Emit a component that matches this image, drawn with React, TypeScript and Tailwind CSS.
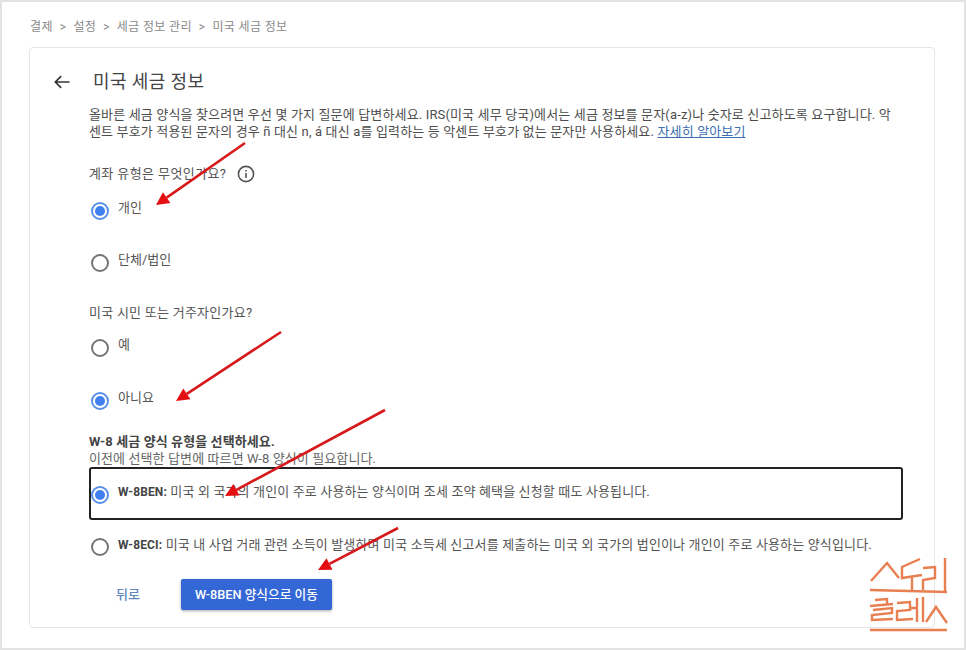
import React from "react";

const KR = "font-['Roboto','Noto_Sans_CJK_KR',sans-serif]";

function Radio({ on }: { on?: boolean }) {
  return on ? (
    <span className="shrink-0 w-[18px] h-[18px] rounded-full border-2 border-[#5a8fe6] flex items-center justify-center">
      <span className="w-[10px] h-[10px] rounded-full bg-[#3f80ee]" />
    </span>
  ) : (
    <span className="shrink-0 w-[18px] h-[18px] rounded-full border-2 border-[#757575]" />
  );
}

function Option({ on, label, cls }: { on?: boolean; label: string; cls: string }) {
  return (
    <div className={`flex items-start gap-[9px] pl-[2px] ${cls}`}>
      <Radio on={on} />
      <span className="text-[13px] leading-[16px] text-[#555] -mt-[2px]">{label}</span>
    </div>
  );
}

const arrows: [number, number, number, number][] = [
  [245, 143, 156, 205],
  [281, 332, 176, 401],
  [385, 410, 225, 496],
  [398, 528, 318, 570],
];

function Arrow({ a }: { a: [number, number, number, number] }) {
  const [x1, y1, x2, y2] = a;
  const dx = x2 - x1, dy = y2 - y1;
  const l = Math.hypot(dx, dy);
  const ux = dx / l, uy = dy / l;
  const bx = x2 - ux * 13, by = y2 - uy * 13;
  const px = -uy * 6.5, py = ux * 6.5;
  return (
    <g>
      <line x1={x1} y1={y1} x2={bx} y2={by} stroke="#d7191c" strokeWidth="2.6" />
      <polygon points={`${x2},${y2} ${bx + px},${by + py} ${bx - px},${by - py}`} fill="#e30f12" />
    </g>
  );
}

export default function App() {
  return (
    <div className={`relative w-[966px] h-[650px] bg-white border-2 border-[#e3e3e3] overflow-hidden ${KR}`}>
      <div className="flex items-start gap-[6px] pl-[28px] pt-[17px] h-[45px] text-[12px] leading-[16px] text-[#8a8a8a] tracking-[0.35px]">
        <span>결제</span><span className="px-[1px]">&gt;</span>
        <span>설정</span><span className="px-[1px]">&gt;</span>
        <span>세금 정보 관리</span><span className="px-[1px]">&gt;</span>
        <span>미국 세금 정보</span>
      </div>

      <div className="ml-[27px] w-[906px] h-[581px] border border-[#e6e6e6] rounded-[4px] flex flex-col">
        <div className="flex items-center h-[24px] mt-[22px] pl-[22px]">
          <svg width="20" height="20" viewBox="0 0 24 24" fill="none" stroke="#333" strokeWidth="2">
            <path d="M21 12H4M11 5l-7 7 7 7" />
          </svg>
          <span className="ml-[21px] text-[18px] leading-[24px] text-[#444] tracking-[0.4px]">미국 세금 정보</span>
        </div>

        <div className="pl-[59px] pr-[40px] flex flex-col">
          <p className="mt-[12px] text-[13px] leading-[17px] text-[#4d4d4d] tracking-[0.15px]">
            올바른 세금 양식을 찾으려면 우선 몇 가지 질문에 답변하세요. IRS(미국 세무 당국)에서는 세금 정보를 문자(a-z)나 숫자로 신고하도록 요구합니다. 악센트 부호가 적용된 문자의 경우 ñ 대신 n, á 대신 a를 입력하는 등 악센트 부호가 없는 문자만 사용하세요.{" "}
            <span className="text-[#3d6fb0] underline">자세히 알아보기</span>
          </p>

          <div className="mt-[24px] flex items-center gap-[11px] h-[20px]">
            <span className="text-[13px] text-[#555] tracking-[0.4px]">계좌 유형은 무엇인가요?</span>
            <svg width="18" height="18" viewBox="0 0 18 18" fill="none" stroke="#555" strokeWidth="1.6">
              <circle cx="9" cy="9" r="7.6" />
              <path d="M9 8v5M9 5v1.6" />
            </svg>
          </div>

          <Option on label="개인" cls="mt-[18px]" />
          <Option label="단체/법인" cls="mt-[34px]" />

          <div className="mt-[33px] text-[13px] leading-[16px] text-[#555] tracking-[0.25px]">미국 시민 또는 거주자인가요?</div>

          <Option label="예" cls="mt-[18px]" />
          <Option on label="아니요" cls="mt-[35px]" />

          <div className="mt-[23px] text-[13px] leading-[18px] font-bold text-[#444] tracking-[0.1px]">W-8 세금 양식 유형을 선택하세요.</div>
          <div className="text-[13px] leading-[16px] text-[#666] tracking-[0.1px]">이전에 선택한 답변에 따르면 W-8 양식이 필요합니다.</div>

          <div className="w-[814px] h-[53px] border-2 border-[#222] rounded-[3px] flex items-start gap-[9px] pt-[17px]">
            <Radio on />
            <span className="text-[13px] leading-[16px] text-[#555] tracking-[0.14px] -mt-[2px]"><b className="text-[12px] text-[#444]">W-8BEN:</b> 미국 외 국가의 개인이 주로 사용하는 양식이며 조세 조약 혜택을 신청할 때도 사용됩니다.</span>
          </div>

          <div className="mt-[18px] flex items-start gap-[9px] pl-[2px]">
            <Radio />
            <span className="text-[13px] leading-[16px] text-[#555] tracking-[0.15px] -mt-[1px]"><b className="text-[12px] text-[#444]">W-8ECI:</b> 미국 내 사업 거래 관련 소득이 발생하며 미국 소득세 신고서를 제출하는 미국 외 국가의 법인이나 개인이 주로 사용하는 양식입니다.</span>
          </div>

          <div className="mt-[23px] flex items-center">
            <span className="ml-[27px] text-[13px] text-[#5f86bd] font-medium">뒤로</span>
            <span className="ml-[41px] w-[151px] h-[31px] bg-[#3367d6] rounded-[2px] shadow-[0_1px_3px_rgba(0,0,0,0.35)] text-white text-[12.7px] font-medium flex items-center justify-center">W-8BEN 양식으로 이동</span>
          </div>
        </div>
      </div>

      <svg className="absolute -left-[2px] -top-[2px] pointer-events-none" width="966" height="650" viewBox="0 0 966 650">
        {arrows.map((a, i) => <Arrow key={i} a={a} />)}
      </svg>

      <svg className="absolute left-[858px] top-[548px]" width="100" height="90" viewBox="0 0 100 90" fill="none" stroke="#e87f50" strokeWidth="2.4" aria-label="스토리 클래스 로고">
        <path d="M11 31L27 13L39 28M10 40L87 42" />
        <path d="M60 9L42 17V28L62 25M52 27V40" />
        <path d="M63 18L75 17V28L63 30V40M85 8V42" />
        <path d="M15 50L27 49V55M10 56L33 54M13 60L32 58V63L12 65V70L33 69" />
        <path d="M37 53L50 52V60L37 61V70L53 69M50 58L57 58M57 48V72M63 47V72" />
        <path d="M66 72L76 57L87 73M10 80L87 80" />
      </svg>
    </div>
  );
}
